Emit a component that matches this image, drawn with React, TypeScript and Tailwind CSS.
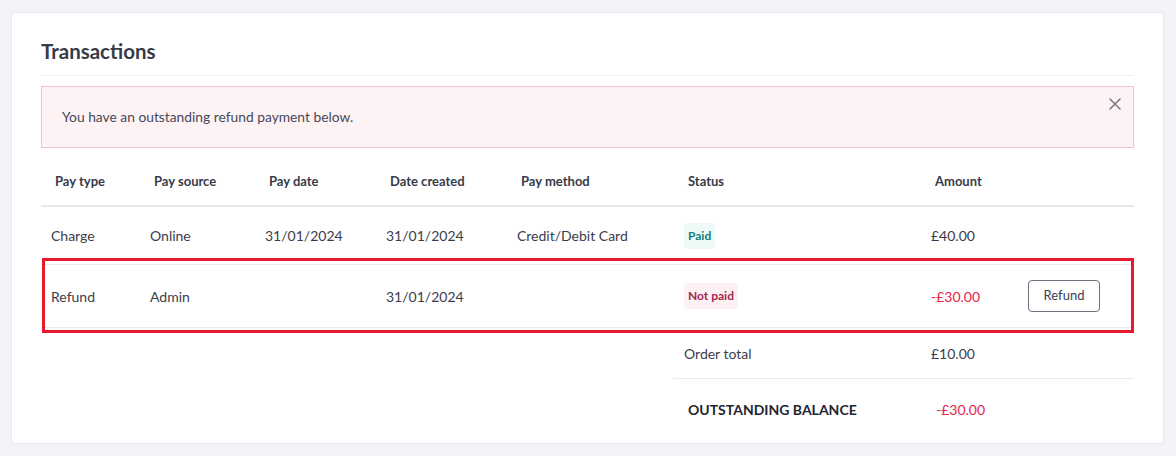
import React from "react";

const cols = "grid grid-cols-[99px_115px_121px_131px_167px_247px_97px_116px]";

function X() {
  return (
    <svg width="12" height="12" viewBox="0 0 12 12" fill="none" stroke="#7a7a86" strokeWidth="1.6" strokeLinecap="round">
      <path d="M1 1 L11 11 M11 1 L1 11" />
    </svg>
  );
}

export default function App() {
  const headers = ["Pay type", "Pay source", "Pay date", "Date created", "Pay method", "Status", "Amount", ""];
  return (
    <div
      className="w-[1176px] h-[456px] bg-[#f3f4f8] pt-[12px] pl-[11px]"
      style={{ fontFamily: "Lato, 'Open Sans', sans-serif" }}
    >
      <div className="w-[1153px] h-[432px] bg-white border border-[#e8e9ef] rounded-[4px] px-[29px] pt-[24px] pb-[5px] text-[#3b3d4c]">
        <h2 className="text-[20.5px] leading-[28px] font-bold text-[#383b47] pb-[10px] border-b border-[#eeeff2]">
          Transactions
        </h2>
        <div className="relative mt-[10px] h-[62px] bg-[#fdf3f4] border border-[#f0c5ca] flex items-center pl-[20px] text-[13.8px] text-[#474859]">
          You have an outstanding refund payment below.
          <div className="absolute right-[12px] top-[11px]">
            <X />
          </div>
        </div>

        <div className="relative">
          <div className={`${cols} h-[59px] border-b-2 border-[#e6e7ec] pt-[10px] items-center text-[13px] font-bold text-[#383b4a]`}>
            {headers.map((h, i) => (
              <div key={i} className="pl-[14px]">{h}</div>
            ))}
          </div>

          <div className={`${cols} h-[58px] border-b border-[#e9eaee] items-center text-[14px]`}>
            <div className="pl-[10px]">Charge</div>
            <div className="pl-[10px]">Online</div>
            <div className="pl-[10px]">31/01/2024</div>
            <div className="pl-[10px]">31/01/2024</div>
            <div className="pl-[10px]">Credit/Debit Card</div>
            <div className="pl-[10px]">
              <span className="inline-flex items-center h-[26px] px-[4px] rounded-[4px] bg-[#eefaf8] text-[#14807a] text-[12px] font-bold">Paid</span>
            </div>
            <div className="pl-[10px]">£40.00</div>
            <div></div>
          </div>

          <div className={`${cols} h-[63px] border-b border-[#e9eaee] items-center text-[14px]`}>
            <div className="pl-[10px]">Refund</div>
            <div className="pl-[10px]">Admin</div>
            <div className="pl-[10px]"></div>
            <div className="pl-[10px]">31/01/2024</div>
            <div className="pl-[10px]"></div>
            <div className="pl-[10px]">
              <span className="inline-flex items-center h-[26px] px-[4px] rounded-[4px] bg-[#fdf1f4] text-[#a2264d] text-[12px] font-bold">Not paid</span>
            </div>
            <div className="pl-[10px] text-[#e5264a]">-£30.00</div>
            <div className="pl-[10px]">
              <button className="w-[72px] h-[32px] border border-[#6f7080] rounded-[4px] text-[13px] text-[#3b3d4c] bg-white">Refund</button>
            </div>
          </div>

          <div className="absolute left-[1px] top-[110px] w-[1092px] h-[75px] border-[3px] border-[#e8192c] pointer-events-none"></div>

          <div className={`${cols}`}>
            <div className="col-start-6 col-span-3 -ml-px">
              <div className="grid grid-cols-[248px_97px_116px] h-[51px] border-b border-[#e9eaee] items-center text-[14px]">
                <div className="pl-[11px]">Order total</div>
                <div className="pl-[10px]">£10.00</div>
                <div></div>
              </div>
              <div className="grid grid-cols-[248px_97px_116px] h-[60px] items-center text-[14px]">
                <div className="pl-[15px] font-bold text-[#23252f]">OUTSTANDING BALANCE</div>
                <div className="pl-[15px] text-[#e5264a]">-£30.00</div>
                <div></div>
              </div>
            </div>
          </div>
        </div>
      </div>
    </div>
  );
}
